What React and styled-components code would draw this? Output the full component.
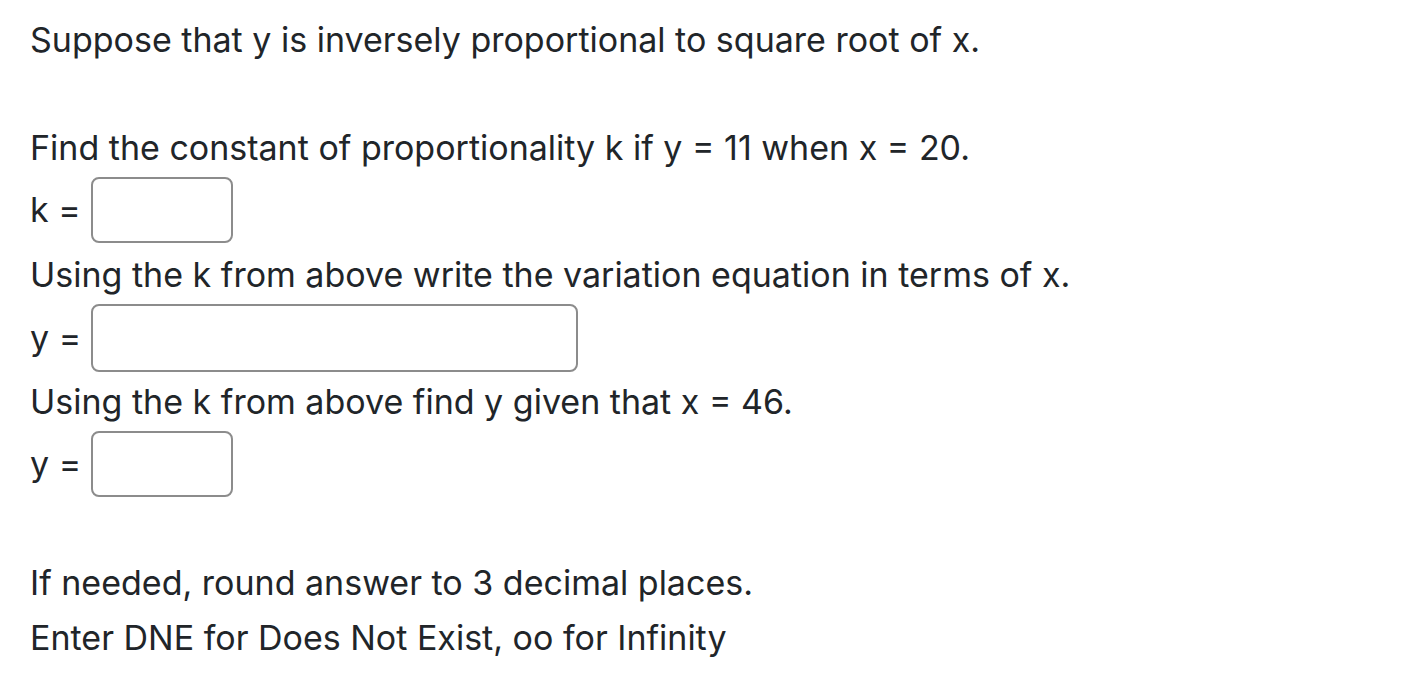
import React from 'react';
import styled, { createGlobalStyle } from 'styled-components';

const GlobalStyle = createGlobalStyle`
  body {
    margin: 0;
    background: #ffffff;
    font-family: Inter, 'Liberation Sans', sans-serif;
    color: #212529;
  }
`;

const Page = styled.div`
  padding: 16px 30px 0;
  font-size: 34px;
  line-height: 48px;
`;

const Text = styled.div`
  margin-top: ${props => props.top || 0}px;
`;

const AnswerRow = styled.div`
  display: flex;
  align-items: center;
  gap: 10px;
  margin-top: 5px;
  margin-bottom: ${props => (props.wide ? 6 : 8)}px;
`;

const Label = styled.span`
  white-space: nowrap;
`;

const AnswerBox = styled.input`
  box-sizing: border-box;
  width: ${props => (props.wide ? 487 : 142)}px;
  height: ${props => (props.wide ? 68 : 66)}px;
  border: 2px solid #8c8c8c;
  border-radius: 8px;
  background: #fff;
  font-size: 32px;
  padding: 0 12px;
  outline: none;
`;

export default function App() {
  return (
    <Page>
      <GlobalStyle />
      <Text>Suppose that y is inversely proportional to square root of x.</Text>

      <Text top={60}>Find the constant of proportionality k if y = 11 when x = 20.</Text>
      <AnswerRow>
        <Label>k =</Label>
        <AnswerBox />
      </AnswerRow>

      <Text>Using the k from above write the variation equation in terms of x.</Text>
      <AnswerRow wide>
        <Label>y =</Label>
        <AnswerBox wide />
      </AnswerRow>

      <Text>Using the k from above find y given that x = 46.</Text>
      <AnswerRow>
        <Label>y =</Label>
        <AnswerBox />
      </AnswerRow>

      <Text top={62}>If needed, round answer to 3 decimal places.</Text>
      <Text top={7}>Enter DNE for Does Not Exist, oo for Infinity</Text>
    </Page>
  );
}
